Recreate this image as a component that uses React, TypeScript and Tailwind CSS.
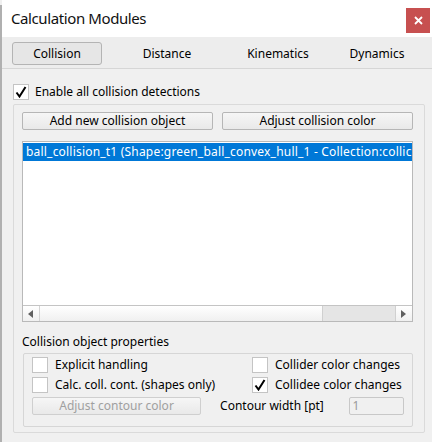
import React from 'react';

const font = { fontFamily: '"Noto Sans", "Open Sans", sans-serif' };

const Check = () => (
  <svg width="12" height="12" viewBox="0 0 12 12">
    <path d="M1.5 6.5 L4.5 10.5 L10.5 1" fill="none" stroke="#000" strokeWidth="2" />
  </svg>
);

const CheckBox: React.FC<{ checked?: boolean }> = ({ checked }) => (
  <div className="w-[16px] h-[16px] bg-white border border-[#c4c4c4] flex items-center justify-center shrink-0">
    {checked && <Check />}
  </div>
);

const Button: React.FC<{ label: string; disabled?: boolean; className?: string }> = ({ label, disabled, className }) => (
  <div
    className={`h-[18px] border border-[#b6b6b6] rounded-[2px] bg-gradient-to-b from-[#f6f6f6] to-[#e9e9e9] flex items-center justify-center text-[12px] leading-none ${
      disabled ? 'text-[#a0a0a0] border-[#cfcfcf]' : 'text-black'
    } ${className ?? ''}`}
  >
    {label}
  </div>
);

export default function App() {
  return (
    <div className="w-[432px] h-[442px] bg-[#f0f0f0] flex overflow-hidden" style={font}>
      {/* window behind */}
      <div className="w-[2px] mt-[5px] bg-[#b0b0b0] shrink-0" />
      <div className="flex-1 flex flex-col">
        {/* title bar */}
        <div className="h-[37px] bg-white flex items-start shrink-0">
          <div className="ml-[9px] mt-[7px] text-[15px] tracking-[-0.4px] text-[#111]">Calculation Modules</div>
          <div className="ml-auto mr-[2px] mt-[8px] w-[24px] h-[25px] bg-[#c75050] flex items-center justify-center">
            <svg width="9" height="9" viewBox="0 0 9 9">
              <path d="M1 1 L8 8 M8 1 L1 8" stroke="#fff" strokeWidth="1.8" />
            </svg>
          </div>
        </div>

        {/* tabs */}
        <div className="h-[32px] bg-[#ededed] border-b border-[#d6d6d6] flex items-start pt-[5px] text-[12px] shrink-0">
          <div className="ml-[10px] w-[90px] h-[23px] border border-[#b4b4b4] rounded-[3px] bg-[#e6e6e6] flex items-center justify-center">
            Collision
          </div>
          <div className="w-[130px] h-[23px] flex items-center justify-center">Distance</div>
          <div className="w-[92px] h-[23px] flex items-center justify-center">Kinematics</div>
          <div className="w-[106px] h-[23px] flex items-center justify-center">Dynamics</div>
        </div>

        {/* body */}
        <div className="flex-1 flex flex-col pl-[11px] pr-[7px] text-[12px]">
          <div className="flex items-center gap-[6px] mt-[15px] h-[16px]">
            <CheckBox checked />
            <span>Enable all collision detections</span>
          </div>

          <div className="mt-[4px] h-[329px] border border-[#dadada] rounded-[2px] flex flex-col px-[8px] pt-[7px]">
            <div className="flex gap-[9px]">
              <Button label="Add new collision object" className="w-[191px]" />
              <Button label="Adjust collision color" className="w-[191px]" />
            </div>

            <div className="mt-[11px] w-[391px] h-[181px] border border-[#b9b9b9] bg-white flex flex-col">
              <div className="flex-1 pt-[1px] overflow-hidden">
                <div className="h-[18px] bg-[#0078d7] text-white whitespace-nowrap overflow-hidden pl-[3px] leading-[18px] tracking-[0.2px]">
                  ball_collision_t1 (Shape:green_ball_convex_hull_1 - Collection:collic
                </div>
              </div>
              <div className="h-[16px] border-t border-[#c4c4c4] flex bg-gradient-to-b from-[#ffffff] to-[#f0f0f0]">
                <div className="w-[17px] border-r border-[#d4d4d4] flex items-center justify-center">
                  <svg width="6" height="8" viewBox="0 0 6 8">
                    <path d="M5 0 L0 4 L5 8 Z" fill="#606060" />
                  </svg>
                </div>
                <div className="flex-1" />
                <div className="w-[74px] bg-[#e5e5e5] border-l border-r border-[#d0d0d0]" />
                <div className="w-[16px] flex items-center justify-center">
                  <svg width="6" height="8" viewBox="0 0 6 8">
                    <path d="M0 0 L5 4 L0 8 Z" fill="#606060" />
                  </svg>
                </div>
              </div>
            </div>

            <div className="mt-[14px] leading-none">Collision object properties</div>

            <div className="mt-[5px] ml-[1px] w-[390px] h-[74px] border border-[#d6d6d6] rounded-[2px] px-[8px] pt-[3px] flex flex-col gap-[4px]">
              <div className="flex items-center h-[16px]">
                <div className="w-[220px] flex items-center gap-[7px]">
                  <CheckBox />
                  <span>Explicit handling</span>
                </div>
                <div className="flex items-center gap-[7px]">
                  <CheckBox />
                  <span>Collider color changes</span>
                </div>
              </div>
              <div className="flex items-center h-[16px]">
                <div className="w-[220px] flex items-center gap-[7px]">
                  <CheckBox />
                  <span>Calc. coll. cont. (shapes only)</span>
                </div>
                <div className="flex items-center gap-[7px]">
                  <CheckBox checked />
                  <span>Collidee color changes</span>
                </div>
              </div>
              <div className="flex items-center h-[18px]">
                <Button label="Adjust contour color" disabled className="w-[171px]" />
                <span className="ml-[19px] w-[130px]">Contour width [pt]</span>
                <div className="w-[56px] h-[18px] border border-[#c8c8c8] rounded-[2px] bg-[#f0f0f0] text-[#9a9a9a] pl-[3px] leading-[16px]">
                  1
                </div>
              </div>
            </div>
          </div>
        </div>
      </div>
    </div>
  );
}
